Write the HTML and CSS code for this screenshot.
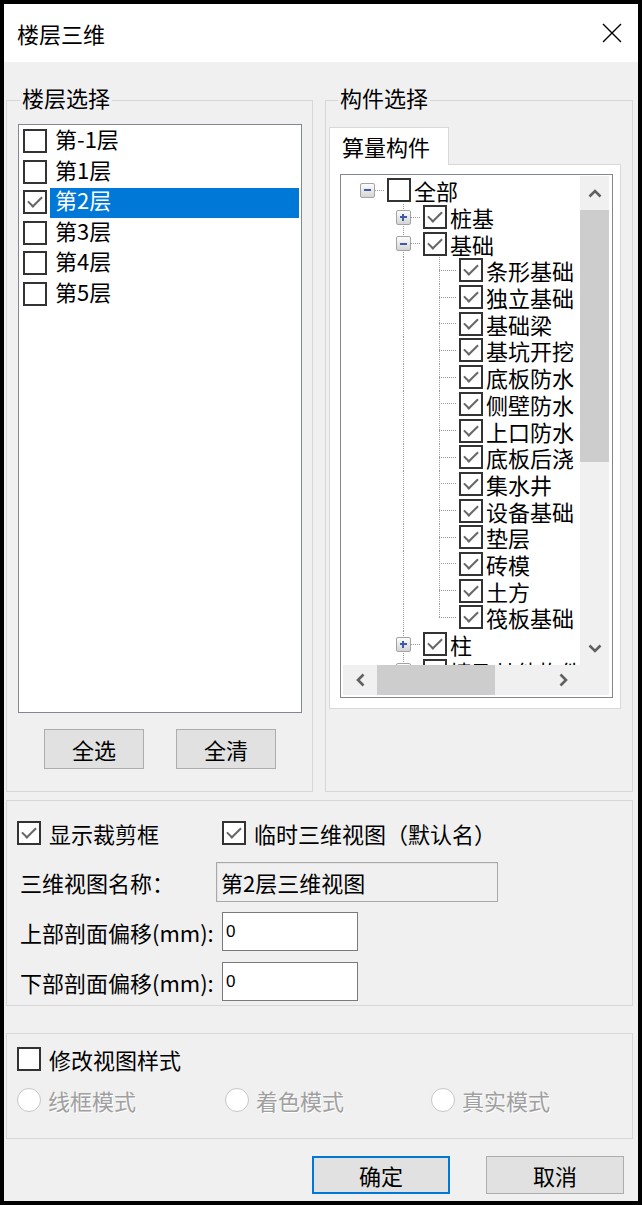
FILE: index.html
```html
<!DOCTYPE html>
<html lang="zh-CN">
<head>
    <meta charset="UTF-8">
    <title>楼层三维</title>
    <link rel="stylesheet" href="styles.css">
</head>
<body>
<div class="dialog">
    <div class="titlebar">
        <span class="title">楼层三维</span>
        <svg class="close" width="20" height="20" viewBox="0 0 20 20"><path d="M1 1L19 19M19 1L1 19" stroke="#000" stroke-width="1.4" fill="none"/></svg>
    </div>

    <div class="content">
        <div class="top-groups">
            <fieldset class="group floors">
                <legend>楼层选择</legend>
                <div class="listbox">
                    <div class="list-item"><span class="cb"></span><span class="item-text">第-1层</span></div>
                    <div class="list-item"><span class="cb"></span><span class="item-text">第1层</span></div>
                    <div class="list-item"><span class="cb on"></span><span class="item-text selected">第2层</span></div>
                    <div class="list-item"><span class="cb"></span><span class="item-text">第3层</span></div>
                    <div class="list-item"><span class="cb"></span><span class="item-text">第4层</span></div>
                    <div class="list-item"><span class="cb"></span><span class="item-text">第5层</span></div>
                </div>
                <div class="list-buttons">
                    <button class="btn small">全选</button>
                    <button class="btn small">全清</button>
                </div>
            </fieldset>

            <fieldset class="group parts">
                <legend>构件选择</legend>
                <div class="tabs">
                    <div class="tab">算量构件</div>
                    <div class="tab-rest"></div>
                </div>
                <div class="tab-panel">
                    <div class="tree">
                        <div class="tree-rows">
                            <div class="node"><span class="ind right"><span class="exp minus"></span></span><span class="cb"></span><span class="node-text">全部</span></div>
                            <div class="node"><span class="ind"></span><span class="ind tee"><span class="exp plus"></span></span><span class="cb on"></span><span class="node-text">桩基</span></div>
                            <div class="node"><span class="ind"></span><span class="ind tee"><span class="exp minus"></span></span><span class="cb on"></span><span class="node-text">基础</span></div>
                            <div class="node"><span class="ind"></span><span class="ind pipe"></span><span class="ind tee"></span><span class="cb on"></span><span class="node-text">条形基础</span></div>
                            <div class="node"><span class="ind"></span><span class="ind pipe"></span><span class="ind tee"></span><span class="cb on"></span><span class="node-text">独立基础</span></div>
                            <div class="node"><span class="ind"></span><span class="ind pipe"></span><span class="ind tee"></span><span class="cb on"></span><span class="node-text">基础梁</span></div>
                            <div class="node"><span class="ind"></span><span class="ind pipe"></span><span class="ind tee"></span><span class="cb on"></span><span class="node-text">基坑开挖</span></div>
                            <div class="node"><span class="ind"></span><span class="ind pipe"></span><span class="ind tee"></span><span class="cb on"></span><span class="node-text">底板防水</span></div>
                            <div class="node"><span class="ind"></span><span class="ind pipe"></span><span class="ind tee"></span><span class="cb on"></span><span class="node-text">侧壁防水</span></div>
                            <div class="node"><span class="ind"></span><span class="ind pipe"></span><span class="ind tee"></span><span class="cb on"></span><span class="node-text">上口防水</span></div>
                            <div class="node"><span class="ind"></span><span class="ind pipe"></span><span class="ind tee"></span><span class="cb on"></span><span class="node-text">底板后浇</span></div>
                            <div class="node"><span class="ind"></span><span class="ind pipe"></span><span class="ind tee"></span><span class="cb on"></span><span class="node-text">集水井</span></div>
                            <div class="node"><span class="ind"></span><span class="ind pipe"></span><span class="ind tee"></span><span class="cb on"></span><span class="node-text">设备基础</span></div>
                            <div class="node"><span class="ind"></span><span class="ind pipe"></span><span class="ind tee"></span><span class="cb on"></span><span class="node-text">垫层</span></div>
                            <div class="node"><span class="ind"></span><span class="ind pipe"></span><span class="ind tee"></span><span class="cb on"></span><span class="node-text">砖模</span></div>
                            <div class="node"><span class="ind"></span><span class="ind pipe"></span><span class="ind tee"></span><span class="cb on"></span><span class="node-text">土方</span></div>
                            <div class="node"><span class="ind"></span><span class="ind pipe"></span><span class="ind elbow"></span><span class="cb on"></span><span class="node-text">筏板基础</span></div>
                            <div class="node"><span class="ind"></span><span class="ind tee"><span class="exp plus"></span></span><span class="cb on"></span><span class="node-text">柱</span></div>
                            <div class="node"><span class="ind"></span><span class="ind tee"><span class="exp plus"></span></span><span class="cb on"></span><span class="node-text">墙及其他构件</span></div>
                        </div>
                        <div class="vscroll">
                            <div class="sb-btn"><svg width="14" height="9" viewBox="0 0 14 9"><polyline points="1.5,7.5 7,2 12.5,7.5" fill="none" stroke="#606060" stroke-width="2.6"/></svg></div>
                            <div class="sb-track"><div class="vthumb"></div></div>
                            <div class="sb-btn"><svg width="14" height="9" viewBox="0 0 14 9"><polyline points="1.5,1.5 7,7 12.5,1.5" fill="none" stroke="#606060" stroke-width="2.6"/></svg></div>
                        </div>
                        <div class="hscroll">
                            <div class="sb-btn"><svg width="9" height="14" viewBox="0 0 9 14"><polyline points="7.5,1.5 2,7 7.5,12.5" fill="none" stroke="#606060" stroke-width="2.6"/></svg></div>
                            <div class="sb-track h"><div class="hthumb"></div></div>
                            <div class="sb-btn"><svg width="9" height="14" viewBox="0 0 9 14"><polyline points="1.5,1.5 7,7 1.5,12.5" fill="none" stroke="#606060" stroke-width="2.6"/></svg></div>
                        </div>
                        <div class="corner"></div>
                    </div>
                </div>
            </fieldset>
        </div>

        <div class="group view-opts">
            <div class="check-row">
                <label class="opt first"><span class="cb on"></span>显示裁剪框</label>
                <label class="opt"><span class="cb on"></span>临时三维视图（默认名）</label>
            </div>
            <div class="field-row name-row">
                <span class="field-label name-label">三维视图名称：</span>
                <input class="textbox readonly" type="text" value="第2层三维视图" readonly>
            </div>
            <div class="field-row offset-row">
                <span class="field-label">上部剖面偏移(mm):</span>
                <input class="textbox num" type="text" value="0">
            </div>
            <div class="field-row offset-row second">
                <span class="field-label">下部剖面偏移(mm):</span>
                <input class="textbox num" type="text" value="0">
            </div>
        </div>

        <div class="group style-opts">
            <div class="check-row">
                <label class="opt"><span class="cb"></span>修改视图样式</label>
            </div>
            <div class="radio-row">
                <label class="radio r1"><span class="rb"></span>线框模式</label>
                <label class="radio r2"><span class="rb"></span>着色模式</label>
                <label class="radio"><span class="rb"></span>真实模式</label>
            </div>
        </div>

        <div class="actions">
            <button class="btn main default">确定</button>
            <button class="btn main">取消</button>
        </div>
    </div>
</div>
</body>
</html>
```

FILE: styles.css
```css
body {
    margin: 0;
    background: #000;
}
.dialog {
    width: 642px;
    height: 1205px;
    box-sizing: border-box;
    border: 4px solid #000;
    background: #f0f0f0;
    font-family: "Noto Sans CJK SC", sans-serif;
    font-size: 22px;
    color: #000;
    overflow: hidden;
}
.titlebar {
    height: 58px;
    background: #fff;
    display: flex;
    align-items: center;
    justify-content: space-between;
    padding: 0 16px 0 13px;
}
.title {
    line-height: 1;
}
.content {
    padding: 25px 5px 0 2px;
}
.top-groups {
    display: grid;
    grid-template-columns: 307px 308px;
    column-gap: 12px;
}
.group {
    border: 1px solid #d7d7d7;
}
fieldset.group {
    margin: 0;
    min-width: 0;
}
legend {
    font-size: 22px;
    line-height: 20px;
    padding: 0 2px 6px 2px;
    margin-left: 2px;
}
.floors {
    padding: 11px 10px 22px 11px;
}
.parts {
    padding: 14px 11px 0 3px;
}
.parts legend {
    margin-left: 9px;
}

/* floor list */
.listbox {
    height: 589px;
    box-sizing: border-box;
    border: 1px solid #828790;
    background: #fff;
    padding: 2px 2px 0 4px;
}
.list-item {
    height: 30.6px;
    display: flex;
    align-items: flex-start;
}
.list-item .cb {
    margin-top: 2px;
}
.item-text {
    flex: 1;
    height: 30px;
    margin-left: 3px;
    padding-left: 5px;
    line-height: 22px;
    white-space: nowrap;
}
.item-text.selected {
    background: #0078d7;
    color: #fff;
}
.list-buttons {
    display: flex;
    justify-content: center;
    gap: 32px;
    margin-top: 16px;
}

/* checkbox / radio */
.cb {
    width: 24px;
    height: 24px;
    box-sizing: border-box;
    border: 2px solid #333;
    background: #fff;
    display: inline-flex;
    align-items: center;
    justify-content: center;
    flex: none;
}
.cb.on::after {
    content: '';
    width: 12px;
    height: 6px;
    border-left: 2px solid #666;
    border-bottom: 2px solid #666;
    transform: rotate(-45deg);
    margin-top: -4px;
}
.rb {
    width: 24px;
    height: 24px;
    box-sizing: border-box;
    border: 1px solid #c6c6c6;
    border-radius: 50%;
    background: #fff;
    flex: none;
}

/* buttons */
.btn {
    font-family: "Noto Sans CJK SC", sans-serif;
    font-size: 22px;
    color: #000;
    background: #e1e1e1;
    border: 1px solid #adadad;
    padding: 0;
    line-height: 1;
}
.btn.small {
    width: 100px;
    height: 40px;
}
.btn.main {
    width: 138px;
    height: 38px;
}
.btn.default {
    border: 2px solid #0078d7;
}

/* tab + tree */
.tabs {
    display: flex;
    height: 38px;
}
.tab {
    width: 120px;
    box-sizing: border-box;
    border: 1px solid #d9d9d9;
    border-bottom: none;
    background: #fff;
    padding-left: 12px;
    line-height: 36px;
}
.tab-rest {
    flex: 1;
    border-bottom: 1px solid #d9d9d9;
}
.tab-panel {
    border: 1px solid #d9d9d9;
    border-top: none;
    background: #fff;
    padding: 9px 7px 10px 10px;
}
.tree {
    height: 524px;
    box-sizing: border-box;
    border: 1px solid #828790;
    padding: 1px 3px 2px 2px;
    display: grid;
    grid-template-columns: 1fr 29px;
    grid-template-rows: 1fr 30px;
}
.tree-rows {
    overflow: hidden;
    padding: 1px 0 0 6px;
}
.node {
    height: 26.7px;
    display: flex;
    align-items: center;
    white-space: nowrap;
}
.ind {
    width: 36px;
    flex: none;
    align-self: stretch;
    display: flex;
    align-items: center;
    justify-content: center;
    background-repeat: no-repeat;
}
.pipe {
    background-image: repeating-linear-gradient(to bottom, #9a9a9a 0 1px, transparent 1px 2px);
    background-size: 1px 100%;
    background-position: center top;
}
.right {
    background-image: repeating-linear-gradient(to right, #9a9a9a 0 1px, transparent 1px 2px);
    background-size: 18px 1px;
    background-position: right center;
}
.tee {
    background-image: repeating-linear-gradient(to bottom, #9a9a9a 0 1px, transparent 1px 2px),
                      repeating-linear-gradient(to right, #9a9a9a 0 1px, transparent 1px 2px);
    background-size: 1px 100%, 18px 1px;
    background-position: center top, right center;
}
.elbow {
    background-image: repeating-linear-gradient(to bottom, #9a9a9a 0 1px, transparent 1px 2px),
                      repeating-linear-gradient(to right, #9a9a9a 0 1px, transparent 1px 2px);
    background-size: 1px 50%, 18px 1px;
    background-position: center top, right center;
}
.exp {
    width: 15px;
    height: 15px;
    box-sizing: border-box;
    border: 1px solid #a3a3a3;
    border-radius: 2px;
    background: linear-gradient(#fdfdfd, #d4d4d4);
}
.exp.minus {
    background: linear-gradient(#3c5ca8, #3c5ca8) center / 7px 2px no-repeat,
                linear-gradient(#fdfdfd, #d4d4d4);
}
.exp.plus {
    background: linear-gradient(#3c5ca8, #3c5ca8) center / 7px 2px no-repeat,
                linear-gradient(#3c5ca8, #3c5ca8) center / 2px 7px no-repeat,
                linear-gradient(#fdfdfd, #d4d4d4);
}
.node .cb {
    margin-left: 2px;
}
.node-text {
    margin-left: 3px;
    line-height: 26px;
}

/* scrollbars */
.vscroll {
    background: #f0f0f0;
    display: flex;
    flex-direction: column;
}
.hscroll {
    background: #f0f0f0;
    display: flex;
}
.corner {
    background: #f0f0f0;
}
.sb-btn {
    flex: none;
    width: 100%;
    height: 34px;
    display: flex;
    align-items: center;
    justify-content: center;
}
.hscroll .sb-btn {
    width: 34px;
    height: 100%;
}
.sb-track {
    flex: 1;
}
.vthumb {
    height: 252px;
    background: #cdcdcd;
}
.sb-track.h {
    display: flex;
}
.hthumb {
    width: 118px;
    background: #cdcdcd;
}

/* view options */
.view-opts {
    margin-top: 8px;
    padding: 18px 10px 4px 10px;
}
.check-row {
    height: 28px;
    display: flex;
    align-items: center;
}
.opt {
    display: flex;
    align-items: center;
    gap: 8px;
    white-space: nowrap;
}
.opt.first {
    width: 205px;
}
.field-row {
    display: flex;
    align-items: center;
}
.field-label {
    margin-left: 3px;
    width: 202px;
    white-space: nowrap;
}
.name-label {
    width: 196px;
}
.name-row {
    margin-top: 15px;
}
.offset-row {
    margin-top: 10px;
}
.offset-row.second {
    margin-top: 11px;
}
.textbox {
    box-sizing: border-box;
    margin: 0;
    border: 1px solid #7a7a7a;
    outline: none;
    color: #000;
    font-family: "Noto Sans CJK SC", sans-serif;
}
.textbox.readonly {
    width: 282px;
    height: 40px;
    background: #f0f0f0;
    border-color: #a9a9a9;
    box-shadow: inset 1px 1px 0 #e3e3e3;
    font-size: 22px;
    padding: 0 0 0 4px;
}
.textbox.num {
    width: 136px;
    height: 39px;
    background: #fff;
    font-family: "Liberation Sans", sans-serif;
    font-size: 17px;
    padding: 0 0 0 3px;
}

/* view style */
.style-opts {
    margin-top: 27px;
    padding: 11px 10px 24px 10px;
}
.radio-row {
    margin-top: 13px;
    height: 28px;
    display: flex;
    align-items: center;
}
.radio {
    display: flex;
    align-items: center;
    gap: 7px;
    color: #a0a0a0;
    text-shadow: 1px 1px 0 #fff;
    white-space: nowrap;
}
.radio.r1 {
    width: 208px;
}
.radio.r2 {
    width: 206px;
}

.actions {
    margin-top: 17px;
    display: flex;
    justify-content: flex-end;
    gap: 36px;
    padding-right: 9px;
}
```
